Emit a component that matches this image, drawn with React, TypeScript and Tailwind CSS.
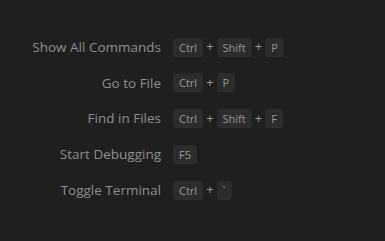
const rows: { label: string; keys: string[] }[] = [
  { label: "Show All Commands", keys: ["Ctrl", "Shift", "P"] },
  { label: "Go to File", keys: ["Ctrl", "P"] },
  { label: "Find in Files", keys: ["Ctrl", "Shift", "F"] },
  { label: "Start Debugging", keys: ["F5"] },
  { label: "Toggle Terminal", keys: ["Ctrl", "`"] },
];

function Key({ k }: { k: string }) {
  return (
    <span className="inline-block rounded-[3px] border border-[#2a2a2a] border-b-[#303030] bg-[#2c2c2c] px-[5px] py-[2px] text-[11px] leading-[13px] text-[#989898]">
      {k}
    </span>
  );
}

export default function App() {
  return (
    <div
      className="flex h-[241px] w-[385px] items-start bg-[#1f1f1f] pt-[38px] text-[#8f8f8f]"
      style={{ fontFamily: '"Open Sans", "Noto Sans", sans-serif' }}
    >
      <div className="ml-[20px] grid grid-cols-[141px_auto] gap-x-[12px] gap-y-[17.75px]">
        {rows.map((r) => (
          <div key={r.label} className="contents">
            <div className="flex h-[18px] items-center justify-end whitespace-nowrap text-[13.5px]">
              {r.label}
            </div>
            <div className="flex h-[18px] items-center">
              {r.keys.map((k, i) => (
                <span key={i} className="flex items-center">
                  {i > 0 && <span className="mx-[3px] text-[13px] text-[#999999]">+</span>}
                  <Key k={k} />
                </span>
              ))}
            </div>
          </div>
        ))}
      </div>
    </div>
  );
}
